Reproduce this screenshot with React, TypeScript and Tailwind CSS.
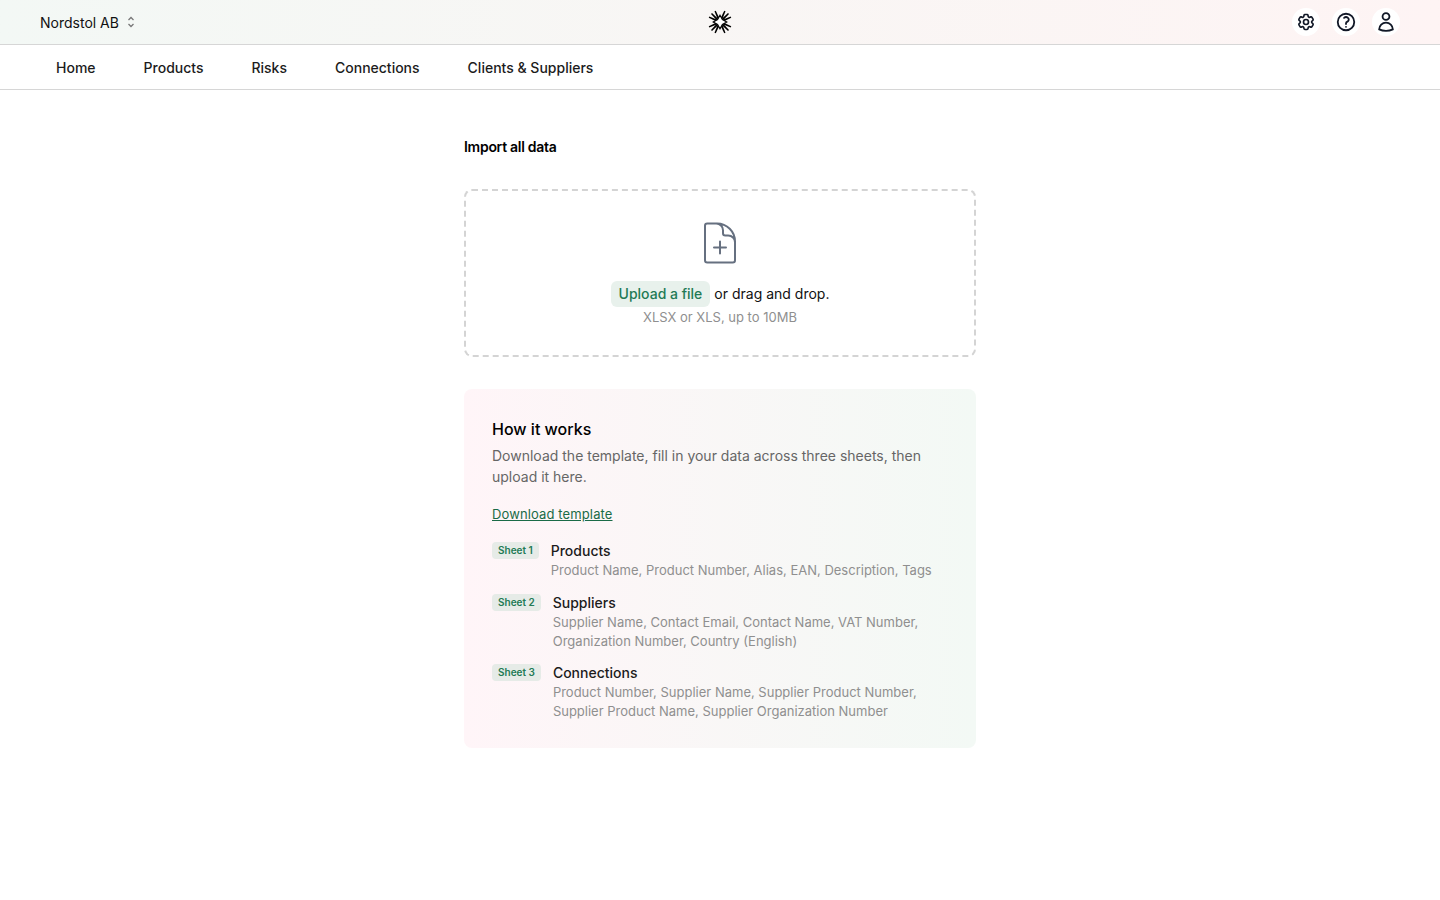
import { HiOutlineCog6Tooth, HiOutlineQuestionMarkCircle, HiOutlineUser, HiOutlineDocumentPlus } from 'react-icons/hi2';

const NAV = ['Home', 'Products', 'Risks', 'Connections', 'Clients & Suppliers'];

const SHEETS = [
  {
    tag: 'Sheet 1',
    title: 'Products',
    lines: ['Product Name, Product Number, Alias, EAN, Description, Tags'],
  },
  {
    tag: 'Sheet 2',
    title: 'Suppliers',
    lines: ['Supplier Name, Contact Email, Contact Name, VAT Number,', 'Organization Number, Country (English)'],
  },
  {
    tag: 'Sheet 3',
    title: 'Connections',
    lines: ['Product Number, Supplier Name, Supplier Product Number,', 'Supplier Product Name, Supplier Organization Number'],
  },
];

function Logo() {
  const spokes = [-24, 24, 45, 66, 114, 135, 156, 204, 225, 246, 294, 315];
  return (
    <svg width="26" height="26" viewBox="0 0 26 26">
      {spokes.map((a) => (
        <path key={a} transform={`rotate(${a} 13 13)`} d="M12 9 L12.3 1 L13.7 1 L14 9 Z" fill="#000" />
      ))}
      <path d="M13 6.2 L15.4 10.6 L19.8 13 L15.4 15.4 L13 19.8 L10.6 15.4 L6.2 13 L10.6 10.6 Z" fill="#fff" stroke="#000" strokeWidth="1.1" />
    </svg>
  );
}

function IconButton({ children }: { children: React.ReactNode }) {
  return <div className="w-7 h-7 rounded-full bg-white flex items-center justify-center text-[#111827]">{children}</div>;
}

export default function App() {
  return (
    <div className="min-h-[900px] bg-white text-black font-['Inter',sans-serif]">
      <header className="h-[45px] border-b border-[#d6d6d6] bg-gradient-to-r from-[#f3f8f5] to-[#fef4f4] pl-10 pr-[40px] flex items-center justify-between">
        <div className="flex items-center gap-1.5 w-[200px] pt-0.5">
          <span className="text-sm text-[#111]">Nordstol AB</span>
          <svg width="12" height="14" viewBox="0 0 12 14" fill="none" stroke="#777" strokeWidth="1.3" className="-mt-0.5">
            <path d="M3.5 5 L6 2.5 L8.5 5" />
            <path d="M3.5 9 L6 11.5 L8.5 9" />
          </svg>
        </div>
        <Logo />
        <div className="flex items-center justify-end gap-3 w-[200px]">
          <IconButton><HiOutlineCog6Tooth className="w-5 h-5" style={{ strokeWidth: 2 }} /></IconButton>
          <IconButton><HiOutlineQuestionMarkCircle className="w-[22px] h-[22px]" style={{ strokeWidth: 2 }} /></IconButton>
          <IconButton><HiOutlineUser className="w-[22px] h-[22px]" style={{ strokeWidth: 2 }} /></IconButton>
        </div>
      </header>

      <nav className="h-[45px] border-b border-[#d6d6d6] pl-14 pt-0.5 flex items-center gap-12">
        {NAV.map((item) => (
          <a key={item} className="text-sm font-medium text-[#1c1c1c]">{item}</a>
        ))}
      </nav>

      <main className="w-[512px] mx-auto pt-[47px]">
        <h1 className="text-sm font-semibold leading-5 tracking-[-0.02em]">Import all data</h1>

        <div className="mt-[32px] h-[168px] border-2 border-dashed border-[#d4d4d4] rounded-lg flex flex-col items-center pt-[28px]">
          <HiOutlineDocumentPlus className="w-12 h-12 text-[#667080]" style={{ strokeWidth: 1 }} />
          <div className="mt-[14px] flex items-center text-sm">
            <span className="px-2 h-[26px] flex items-center rounded-md bg-[#e8f1ec] text-[#237a55] font-medium">Upload a file</span>
            <span className="ml-1 text-[#111]">or drag and drop.</span>
          </div>
          <p className="text-[13px] leading-5 text-[#8f8f8f]">XLSX or XLS, up to 10MB</p>
        </div>

        <section className="mt-8 h-[359px] rounded-lg bg-gradient-to-r from-[#fff5f8] to-[#f3f9f5] px-7 pt-[28px]">
          <h2 className="text-base font-medium leading-6">How it works</h2>
          <p className="mt-[4px] text-sm leading-[21px] text-[#666]">
            Download the template, fill in your data across three sheets, then upload it here.
          </p>
          <a className="inline-block mt-[17px] text-[13px] tracking-[0.12px] leading-5 text-[#1a6b47] underline">Download template</a>

          <div className="mt-[16.1px] flex flex-col gap-[12.75px]">
            {SHEETS.map((sheet) => (
              <div key={sheet.tag} className="flex items-start gap-3">
                <span className="mt-px px-1.5 h-[17px] flex items-center rounded bg-[#e6ebe7] text-[10px] font-semibold text-[#237a55] shrink-0">{sheet.tag}</span>
                <div>
                  <div className="text-sm leading-[20px] font-medium text-[#1c1c1c]">{sheet.title}</div>
                  {sheet.lines.map((line) => (
                    <div key={line} className="text-[13px] leading-[18.85px] text-[#8f8f8f] whitespace-nowrap">{line}</div>
                  ))}
                </div>
              </div>
            ))}
          </div>
        </section>
      </main>
    </div>
  );
}
